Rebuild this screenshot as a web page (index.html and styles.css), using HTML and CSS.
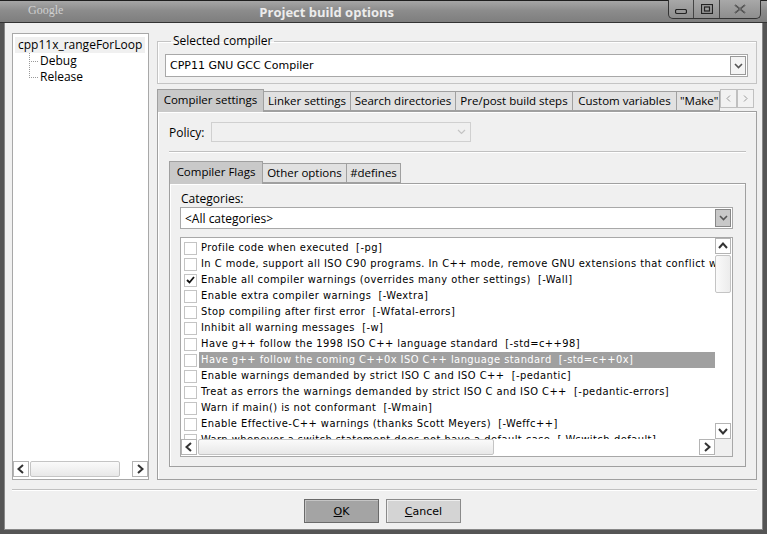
FILE: index.html
```html
<!DOCTYPE html>
<html>
<head>
<meta charset="utf-8">
<link rel="stylesheet" href="styles.css">
</head>
<body>
<div class="window">
  <div class="titlebar">
    <span class="brand">Google</span>
    <span class="title">Project build options</span>
    <div class="winbtns">
      <span class="wb wb-min"><svg width="12" height="6" viewBox="0 0 12 6"><rect x="0.5" y="0.5" width="11" height="4" rx="1.5" fill="none" stroke="#222" stroke-width="1.2"/></svg></span>
      <span class="wb wb-max"><svg width="12" height="10" viewBox="0 0 12 10"><rect x="0.5" y="0.5" width="11" height="9" fill="none" stroke="#222" stroke-width="1.2"/><rect x="3.5" y="3" width="5" height="4" fill="none" stroke="#222" stroke-width="1.2"/></svg></span>
      <span class="wb wb-close"><svg width="12" height="10" viewBox="0 0 12 10"><path d="M1 1 L11 9 M11 1 L1 9" stroke="#222" stroke-width="1.6" fill="none"/><path d="M1 1 L11 9 M11 1 L1 9" stroke="#bbb" stroke-width="0.5" fill="none"/></svg></span>
    </div>
  </div>
  <div class="client">
    <div class="main">
      <div class="tree">
        <div class="tree-items">
          <div class="tree-root">cpp11x_rangeForLoop</div>
          <div class="tree-child"><span class="dots"></span>Debug</div>
          <div class="tree-child last"><span class="dots"></span>Release</div>
        </div>
        <div class="hscroll">
          <span class="sbtn"><svg width="10" height="10" viewBox="0 0 10 10"><path d="M7 1 L2.5 5 L7 9" stroke="#333" stroke-width="2" fill="none"/></svg></span>
          <span class="thumb tree-thumb"></span>
          <span class="strack"></span>
          <span class="sbtn"><svg width="10" height="10" viewBox="0 0 10 10"><path d="M3 1 L7.5 5 L3 9" stroke="#333" stroke-width="2" fill="none"/></svg></span>
        </div>
      </div>
      <div class="right">
        <fieldset class="group">
          <legend>Selected compiler</legend>
          <div class="combo compiler-combo">
            <span class="combo-text tahoma">CPP11 GNU GCC Compiler</span>
            <span class="combo-btn"><svg width="9" height="6" viewBox="0 0 9 6"><path d="M1 1 L4.5 4.5 L8 1" stroke="#555" stroke-width="1.6" fill="none"/></svg></span>
          </div>
        </fieldset>
        <div class="tabs outer-tabs">
          <span class="tab active w-cs">Compiler settings</span>
          <span class="tab w-ls">Linker settings</span>
          <span class="tab w-sd">Search directories</span>
          <span class="tab w-pp">Pre/post build steps</span>
          <span class="tab w-cv">Custom variables</span>
          <span class="tab clipped">"Make" commands</span>
          <span class="tab-arrows">
            <span class="ta"><svg width="5" height="7" viewBox="0 0 5 7"><path d="M4 0.5 L1 3.5 L4 6.5" stroke="#999" fill="none"/></svg></span>
            <span class="ta"><svg width="5" height="7" viewBox="0 0 5 7"><path d="M1 0.5 L4 3.5 L1 6.5" stroke="#999" fill="none"/></svg></span>
          </span>
        </div>
        <div class="pane">
          <div class="policy-row">
            <span class="lbl">Policy:</span>
            <div class="combo policy-combo">
              <span class="combo-text"></span>
              <span class="combo-btn flat"><svg width="9" height="6" viewBox="0 0 9 6"><path d="M1 1 L4.5 4.5 L8 1" stroke="#c4c4c4" stroke-width="1.2" fill="none"/></svg></span>
            </div>
          </div>
          <div class="hsep"></div>
          <div class="tabs inner-tabs">
            <span class="tab active w-cf">Compiler Flags</span>
            <span class="tab w-oo">Other options</span>
            <span class="tab w-df">#defines</span>
          </div>
          <div class="inner-pane">
            <div class="lbl cat-lbl">Categories:</div>
            <div class="combo cat-combo">
              <span class="combo-text">&lt;All categories&gt;</span>
              <span class="combo-btn gray"><svg width="9" height="6" viewBox="0 0 9 6"><path d="M1 1 L4.5 4.5 L8 1" stroke="#555" stroke-width="1.6" fill="none"/></svg></span>
            </div>
            <div class="list">
              <div class="list-body">
                <div class="rows">
                  <div class="row"><span class="cb"></span><span class="rt">Profile code when executed  [-pg]</span></div>
                  <div class="row"><span class="cb"></span><span class="rt">In C mode, support all ISO C90 programs. In C++ mode, remove GNU extensions that conflict with ISO C++  [-ansi]</span></div>
                  <div class="row"><span class="cb"><svg width="9" height="8" viewBox="0 0 9 8"><path d="M1 4 L3.5 6.5 L8 1" stroke="#111" stroke-width="1.8" fill="none"/></svg></span><span class="rt">Enable all compiler warnings (overrides many other settings)  [-Wall]</span></div>
                  <div class="row"><span class="cb"></span><span class="rt">Enable extra compiler warnings  [-Wextra]</span></div>
                  <div class="row"><span class="cb"></span><span class="rt">Stop compiling after first error  [-Wfatal-errors]</span></div>
                  <div class="row"><span class="cb"></span><span class="rt">Inhibit all warning messages  [-w]</span></div>
                  <div class="row"><span class="cb"></span><span class="rt">Have g++ follow the 1998 ISO C++ language standard  [-std=c++98]</span></div>
                  <div class="row sel"><span class="cb"></span><span class="rt">Have g++ follow the coming C++0x ISO C++ language standard  [-std=c++0x]</span></div>
                  <div class="row"><span class="cb"></span><span class="rt">Enable warnings demanded by strict ISO C and ISO C++  [-pedantic]</span></div>
                  <div class="row"><span class="cb"></span><span class="rt">Treat as errors the warnings demanded by strict ISO C and ISO C++  [-pedantic-errors]</span></div>
                  <div class="row"><span class="cb"></span><span class="rt">Warn if main() is not conformant  [-Wmain]</span></div>
                  <div class="row"><span class="cb"></span><span class="rt">Enable Effective-C++ warnings (thanks Scott Meyers)  [-Weffc++]</span></div>
                  <div class="row"><span class="cb"></span><span class="rt">Warn whenever a switch statement does not have a default case  [-Wswitch-default]</span></div>
                </div>
                <div class="vscroll">
                  <span class="sbtn"><svg width="10" height="10" viewBox="0 0 10 10"><path d="M1 7 L5 2.5 L9 7" stroke="#333" stroke-width="2" fill="none"/></svg></span>
                  <span class="vthumb"></span>
                  <span class="vtrack"></span>
                  <span class="sbtn"><svg width="10" height="10" viewBox="0 0 10 10"><path d="M1 3 L5 7.5 L9 3" stroke="#333" stroke-width="2" fill="none"/></svg></span>
                </div>
              </div>
              <div class="list-foot">
                <div class="hscroll list-h">
                  <span class="sbtn"><svg width="10" height="10" viewBox="0 0 10 10"><path d="M7 1 L2.5 5 L7 9" stroke="#333" stroke-width="2" fill="none"/></svg></span>
                  <span class="thumb list-thumb"></span>
                  <span class="strack"></span>
                  <span class="sbtn"><svg width="10" height="10" viewBox="0 0 10 10"><path d="M3 1 L7.5 5 L3 9" stroke="#333" stroke-width="2" fill="none"/></svg></span>
                </div>
                <span class="corner"></span>
              </div>
            </div>
          </div>
        </div>
      </div>
    </div>
    <div class="bsep"></div>
    <div class="buttons">
      <span class="btn default"><u>O</u>K</span>
      <span class="btn"><u>C</u>ancel</span>
    </div>
  </div>
</div>
</body>
</html>
```

FILE: styles.css
```css
* { box-sizing: border-box; }
html, body { margin: 0; padding: 0; }
body {
  width: 767px; height: 534px; overflow: hidden;
  font-family: "DejaVu Sans Condensed", "DejaVu Sans", sans-serif;
  font-size: 11px; color: #000; background: #f0f0f0;
}
.window {
  width: 767px; height: 534px;
  display: flex; flex-direction: column;
  background: #555;
}
.titlebar {
  height: 23px; flex: none;
  background: linear-gradient(#a6a6a6, #8c8c8c 45%, #7e7e7e);
  border-top: 1px solid #1e1e1e;
  border-bottom: 1px solid #333;
  display: flex; align-items: flex-start;
  position: relative;
}
.brand {
  margin-left: 28px; margin-top: 2px;
  color: #d0d0d0; font-family: "Liberation Serif", serif; font-size: 12px;
}
.title {
  margin-left: 196px; margin-top: 2px;
  font-family: "Open Sans", sans-serif; font-weight: bold; font-size: 13px;
  color: #ececec;
}
.winbtns {
  position: absolute; right: 6px; top: -1px;
  display: flex; height: 19px;
  border: 1px solid #333; border-top: none;
  border-radius: 0 0 5px 5px;
  background: linear-gradient(#a8a8a8, #8e8e8e);
}
.wb { display: flex; align-items: center; justify-content: center; height: 100%; }
.wb-min { width: 25px; border-right: 1px solid #444; padding-top: 5px; }
.wb-max { width: 26px; border-right: 1px solid #444; }
.wb-close { width: 40px; }

.client {
  flex: 1; min-height: 0;
  margin: 0 4px 4px 4px;
  background: #f0f0f0;
  padding: 10px 6px 8px 8px;
  display: flex; flex-direction: column;
  box-shadow: inset 1px 0 0 #888, inset -1px 0 0 #888, inset 0 -1px 0 #888;
}
.main { height: 447px; display: flex; gap: 8px; flex: none; min-width: 0; }

.tree {
  width: 137px; flex: none;
  background: #fff; border: 1px solid #a8a8a8;
  display: flex; flex-direction: column;
}
.tree-items { flex: 1; padding: 2px 0 0 2px; font-family: "Open Sans", sans-serif; font-size: 12px; }
.tree-root { height: 16px; line-height: 16px; padding: 0 3px; display: inline-block; background: #f0f0f0; }
.tree-child { height: 16px; line-height: 16px; display: flex; align-items: center; position: relative; padding-left: 14px; }
.dots {
  width: 9px; height: 9px; margin-right: 2px; margin-top: -8px;
  border-left: 1px dotted #999; border-bottom: 1px dotted #999;
}
.tree-child:not(.last)::after {
  content: ""; position: absolute; left: 14px; top: 8px; height: 9px;
  border-left: 1px dotted #999;
}

.hscroll { height: 16px; display: flex; flex: none; align-items: stretch; min-width: 0; }
.sbtn {
  width: 16px; flex: none; background: #fff; border: 1px solid #b4b4b4;
  display: flex; align-items: center; justify-content: center;
}
.thumb { background: linear-gradient(#fafafa, #e8e8e8); border: 1px solid #c4c4c4; border-radius: 2px; flex: none; }
.tree-thumb { width: 90px; margin-left: 1px; }
.strack { flex: 1; }
.tree .hscroll { margin: 0 0 2px 0; }

.right { flex: 1; min-width: 0; display: flex; flex-direction: column; }
.group {
  margin: 0; padding: 5px 8px 6px 7px;
  border: 1px solid #c4c4c4;
  box-shadow: 1px 1px 0 #fff inset;
  min-width: 0;
}
.group legend {
  padding: 0 2px; margin-left: 6px;
  font-family: "Open Sans", sans-serif; font-size: 12px; line-height: 16px;
}
.combo {
  display: flex; background: #fff; border: 1px solid #a8a8a8; align-items: stretch; min-width: 0;
}
.combo-text { flex: 1; min-width: 0; padding-left: 4px; display: flex; align-items: center; white-space: nowrap; overflow: hidden; }
.tahoma { font-family: "DejaVu Sans", sans-serif; font-size: 11px; }
.combo-btn {
  width: 16px; flex: none; display: flex; align-items: center; justify-content: center;
  border: 1px solid #999; margin: 1px; background: #f4f4f4;
}
.combo-btn.gray { background: #c8c8c8; border-color: #888; }
.combo-btn.flat { border: none; background: transparent; }
.compiler-combo { height: 23px; }

.tabs { display: flex; align-items: flex-end; height: 22px; margin-top: 5px; flex: none; position: relative; z-index: 1; min-width: 0; }
.tab {
  height: 20px; line-height: 18px; padding: 0;
  text-align: center; overflow: hidden;
  background: #e1e1e1; border: 1px solid #a0a0a0; border-left: none;
  font-family: "Open Sans", sans-serif; font-size: 11.5px; white-space: nowrap; flex: none;
}
.tab.active {
  height: 23px; line-height: 20px; background: #c9c9c9;
  border-left: 1px solid #a0a0a0; border-bottom: none; margin-bottom: -1px;
}
.w-cs { width: 107px; }
.w-ls { width: 87px; }
.w-sd { width: 105px; }
.w-pp { width: 117px; }
.w-cv { width: 104px; }
.w-cf { width: 94px; }
.w-oo { width: 84px; }
.w-df { width: 54px; }
.tab.clipped { width: 43px; text-align: left; padding-left: 3px; }
.tab-arrows { display: flex; height: 20px; align-self: flex-start; margin-top: 0; flex: none; }
.ta { width: 17px; height: 19px; border: 1px solid #c0c0c0; background: #f2f2f2; display: flex; align-items: center; justify-content: center; }

.pane {
  flex: 1; min-height: 0; min-width: 0; border: 1px solid #a0a0a0;
  box-shadow: inset 1px 1px 0 #fff;
  padding: 10px 10px 12px 11px;
  display: flex; flex-direction: column;
}
.lbl { font-family: "Open Sans", sans-serif; font-size: 12px; }
.policy-row { display: flex; align-items: center; height: 20px; }
.policy-row .lbl { width: 42px; }
.policy-combo { width: 260px; height: 20px; background: #f0f0f0; border-color: #d0d0d0; }
.hsep { height: 2px; border-top: 1px solid #c0c0c0; border-bottom: 1px solid #fff; margin-top: 9px; }
.inner-tabs { margin-top: 8px; }
.inner-pane {
  flex: 1; min-height: 0; min-width: 0; border: 1px solid #a0a0a0;
  box-shadow: inset 1px 1px 0 #fff;
  padding: 7px 12px 9px 10px;
  display: flex; flex-direction: column;
}
.cat-lbl { line-height: 15px; padding-left: 1px; }
.cat-combo { height: 22px; margin-top: 1px; }
.cat-combo .combo-text { font-family: "Open Sans", sans-serif; font-size: 12px; }
.list {
  flex: 1; margin-top: 8px; background: #fff; border: 1px solid #a8a8a8;
  display: flex; flex-direction: column; min-height: 0; min-width: 0;
}
.list-body { flex: 1; display: flex; min-height: 0; min-width: 0; }
.rows { flex: 1; min-width: 0; padding-top: 2px; padding-left: 3px; overflow: hidden; }
.row { height: 16px; display: flex; align-items: center; white-space: pre; min-width: 0; }
.cb {
  width: 13px; height: 13px; flex: none; border: 1px solid #c4c4c4; background: #fff;
  display: flex; align-items: center; justify-content: center;
}
.rt { flex: 1; min-width: 0; margin-left: 2px; padding-left: 2px; height: 16px; line-height: 16px; overflow: hidden; letter-spacing: 0.45px; }
.row.sel .rt { background: #a0a0a0; color: #fff; }
.vscroll { width: 17px; flex: none; display: flex; flex-direction: column; }
.vscroll .sbtn { height: 16px; width: 16px; }
.vthumb { height: 38px; width: 16px; margin-top: 1px; background: linear-gradient(90deg, #fafafa, #ececec); border: 1px solid #c4c4c4; border-radius: 2px; }
.vtrack { flex: 1; }
.list-foot { display: flex; height: 17px; flex: none; min-width: 0; }
.list-h { flex: 1; }
.list-thumb { width: 296px; margin-left: 1px; }
.corner { width: 17px; background: #f0f0f0; flex: none; }

.bsep { height: 2px; border-top: 1px solid #c0c0c0; border-bottom: 1px solid #fff; margin-top: 9px; flex: none; }
.buttons { display: flex; justify-content: center; gap: 7px; margin-top: 8px; padding-right: 4px; }
.btn {
  width: 75px; height: 24px; display: flex; align-items: center; justify-content: center;
  background: #d4d4d4; border: 1px solid #8a8a8a;
  box-shadow: inset 1px 1px 0 #eee;
  font-family: "DejaVu Sans", sans-serif; font-size: 11px;
}
.btn.default { background: #a4a4a4; border-color: #6a6a6a; box-shadow: inset 1px 1px 0 #c4c4c4; }
.btn u { text-decoration: underline; }
```
